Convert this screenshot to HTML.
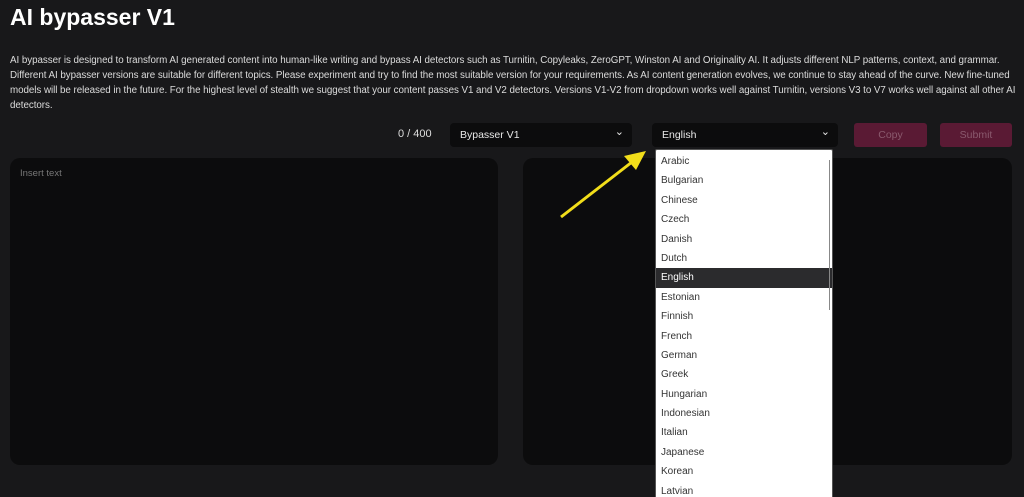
<!DOCTYPE html>
<html><head><style>
html,body{margin:0;width:1024px;height:497px;overflow:hidden}
body{background:#18181a;font-family:"Liberation Sans",sans-serif;color:#e6e6e6;position:relative}
h1{position:absolute;left:10px;top:4px;margin:0;font-size:23px;font-weight:bold;color:#fff}
p{position:absolute;left:10px;top:53px;width:1012px;margin:0;font-size:9.8px;line-height:15px;color:#dcdcdc;letter-spacing:-0.05px}
.abs{position:absolute}
.sel{background:#0c0c0d;border-radius:4px;height:24px;top:123px;font-size:10.5px;line-height:24px;padding-left:10px;box-sizing:border-box;color:#e8e8e8}
.sel:after{content:"⌄";position:absolute;right:8px;top:-3px;font-size:11px}
.btn{background:#5a1a34;border-radius:3px;top:123px;height:24px;font-size:10.5px;line-height:24px;text-align:center;color:#8a5a6e}
.panel{background:#0c0c0d;border-radius:10px;top:158px;height:307px}
.dd{left:655px;top:149px;width:178px;height:360px;background:#fff;border:1px solid #555;border-radius:2px;overflow:hidden;padding-top:2px;box-sizing:border-box}
.dd div{height:19.4px;line-height:19.4px;font-size:10px;color:#333;padding-left:5px}
.dd .on{background:#2b2b2d;color:#fff}
</style></head><body>
<h1>AI bypasser V1</h1>
<p>AI bypasser is designed to transform AI generated content into human-like writing and bypass AI detectors such as Turnitin, Copyleaks, ZeroGPT, Winston AI and Originality AI. It adjusts different NLP patterns, context, and grammar. Different AI bypasser versions are suitable for different topics. Please experiment and try to find the most suitable version for your requirements. As AI content generation evolves, we continue to stay ahead of the curve. New fine-tuned models will be released in the future. For the highest level of stealth we suggest that your content passes V1 and V2 detectors. Versions V1-V2 from dropdown works well against Turnitin, versions V3 to V7 works well against all other AI detectors.</p>
<div class="abs" style="left:398px;top:128px;font-size:11px;color:#ddd">0 / 400</div>
<div class="abs sel" style="left:450px;width:182px">Bypasser V1</div>
<div class="abs sel" style="left:652px;width:186px">English</div>
<div class="abs btn" style="left:854px;width:73px">Copy</div>
<div class="abs btn" style="left:940px;width:72px">Submit</div>
<div class="abs panel" style="left:10px;width:488px"><div style="position:absolute;left:10px;top:10px;font-size:9.5px;color:#777">Insert text</div></div>
<div class="abs panel" style="left:523px;width:489px"></div>
<div class="abs dd">
<div>Arabic</div><div>Bulgarian</div><div>Chinese</div><div>Czech</div><div>Danish</div><div>Dutch</div><div class="on">English</div><div>Estonian</div><div>Finnish</div><div>French</div><div>German</div><div>Greek</div><div>Hungarian</div><div>Indonesian</div><div>Italian</div><div>Japanese</div><div>Korean</div><div>Latvian</div>
<span style="position:absolute;left:173px;top:10px;width:1px;height:150px;background:#888"></span>
</div>
<svg class="abs" style="left:0;top:0" width="1024" height="497"><line x1="561" y1="217" x2="632" y2="162" stroke="#f2de1a" stroke-width="3"/><polygon points="646,151 624,156 636,170" fill="#f2de1a"/></svg>
</body></html>
